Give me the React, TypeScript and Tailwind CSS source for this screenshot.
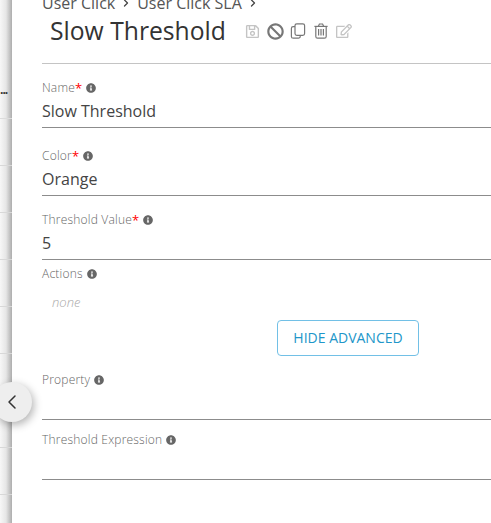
import React from 'react';
import { FaBan, FaInfoCircle, FaRegEdit, FaRegSave } from 'react-icons/fa';
import { ChevronLeft, ChevronRight } from 'lucide-react';

const FieldLabel: React.FC<{ text: string; required?: boolean }> = ({ text, required }) => (
  <div className="flex items-center h-[16px] text-[12px] leading-[16px] font-light tracking-[0.2px] text-[#666]">
    <span>{text}</span>
    {required && <span className="text-[#f00] text-[13px] leading-[16px] font-normal">*</span>}
    <FaInfoCircle className="ml-[4px] text-[#666]" size={10} />
  </div>
);

const Field: React.FC<{ label: string; value?: string; required?: boolean; className: string }> = ({
  label,
  value,
  required,
  className,
}) => (
  <div className={className}>
    <FieldLabel text={label} required={required} />
    <div className="h-[32px] pt-[4px] text-[16px] leading-[22px] text-[#444] border-b border-[#8c8c8c]">{value}</div>
  </div>
);

const App: React.FC = () => {
  return (
    <div className="relative flex w-[491px] h-[523px] overflow-hidden bg-white font-['Open_Sans',sans-serif]">
      {/* list behind the drawer */}
      <div className="relative w-[12px] shrink-0 h-full bg-gradient-to-r from-[#f7f7f7] via-[#e6e6e6] to-[#adadad]">
        <div className="h-[119px] border-b border-[#dcdcdc] text-[12px] leading-none text-[#333] font-bold pt-[84px] tracking-[-1px] overflow-hidden">
          ...
        </div>
        {[0, 1, 2, 3, 4, 5, 6, 7].map((i) => (
          <div key={i} className="h-[47px] border-b border-[#d8d8d8]" />
        ))}
      </div>

      {/* drawer */}
      <div className="flex-1 min-w-0 pl-[30px]">
        <div className="flex items-center h-[14px] -mt-[4px] text-[16px] text-[#555] whitespace-nowrap">
          <span>User Click</span>
          <ChevronRight className="mx-[5px] text-[#444]" size={12} strokeWidth={2.5} />
          <span>User Click SLA</span>
          <ChevronRight className="mx-[5px] text-[#444]" size={12} strokeWidth={2.5} />
        </div>
        <div className="flex items-center h-[34px] mt-[4px] pl-[8px]">
          <h1 className="text-[24.7px] leading-[34px] font-medium text-[#333] whitespace-nowrap">Slow Threshold</h1>
          <div className="flex items-center ml-[19px]">
            <FaRegSave className="text-[#c4c4c4]" size={15} />
            <FaBan className="text-[#777] ml-[7px]" size={17} />
            <svg className="ml-[6px]" width="16" height="16" viewBox="0 0 16 16" fill="none" stroke="#777" strokeWidth="1.2">
              <rect x="5" y="0.8" width="9.6" height="11.6" rx="1.8" />
              <path d="M5 3.6H3.2A1.8 1.8 0 0 0 1.4 5.4V13.4A1.8 1.8 0 0 0 3.2 15.2H8.4A1.8 1.8 0 0 0 10.2 13.4V12.4" />
            </svg>
            <svg className="ml-[7px]" width="16" height="16" viewBox="0 0 16 16" fill="none" stroke="#777" strokeWidth="1.2">
              <path d="M1.4 3.4H14.6" />
              <path d="M5.4 3.2L6.4 1H9.6L10.6 3.2" />
              <path d="M2.8 3.4V13.4A1.8 1.8 0 0 0 4.6 15.2H11.4A1.8 1.8 0 0 0 13.2 13.4V3.4" />
              <path d="M5.6 6V12.6M8 6V12.6M10.4 6V12.6" />
            </svg>
            <FaRegEdit className="text-[#c4c4c4] ml-[7px]" size={16} />
          </div>
        </div>
        <div className="mt-[15px] border-t border-[#c4c4c4]" />

        <Field className="mt-[16px]" label="Name" value="Slow Threshold" required />
        <Field className="mt-[20px]" label="Color" value="Orange" required />
        <Field className="mt-[16px]" label="Threshold Value" value="5" required />

        <div className="mt-[6px]">
          <FieldLabel text="Actions" />
          <div className="mt-[12px] pl-[10px] text-[13px] leading-[16px] italic font-light text-[#aaa]">none</div>
        </div>

        <button className="block ml-[235px] mt-[10px] w-[142px] h-[36px] pb-[1px] rounded-[4px] border border-[#72c0e6] text-[14px] text-[#2196c9] bg-white">
          HIDE ADVANCED
        </button>

        <Field className="mt-[16px]" label="Property" />
        <Field className="mt-[12px]" label="Threshold Expression" />
      </div>

      {/* collapse handle */}
      <button className="absolute left-[-8px] top-[382px] w-[40px] h-[40px] rounded-full bg-[#eeeeee] shadow-[2px_3px_8px_rgba(0,0,0,0.3)] flex items-center justify-center">
        <ChevronLeft className="text-[#333]" size={24} strokeWidth={1.5} />
      </button>
    </div>
  );
};

export default App;
